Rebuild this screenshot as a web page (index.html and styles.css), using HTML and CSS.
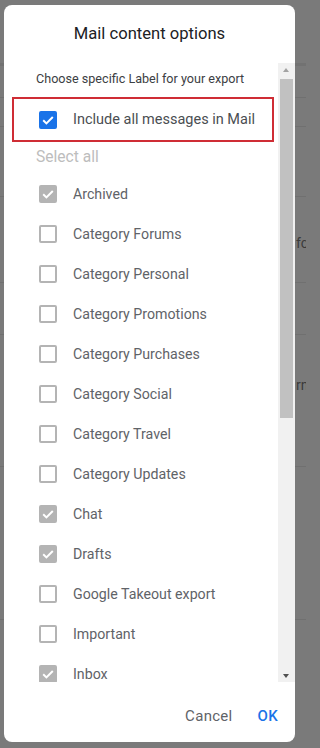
FILE: index.html
```html
<!DOCTYPE html>
<html>
<head>
<meta charset="utf-8">
<link rel="stylesheet" href="styles.css">
</head>
<body>
<div class="backdrop">
  <div class="bg-row r1"></div>
  <div class="bg-row r2"></div>
  <div class="bg-row r3"></div>
  <div class="bg-row r4"></div>
  <div class="bg-row r5"><span class="frag">fc</span></div>
  <div class="bg-row r6"></div>
  <div class="bg-row r7"><span class="frag">rn</span></div>
  <div class="bg-row r8"></div>
  <div class="bg-row r9"></div>
</div>

<div class="dialog">
  <div class="title">Mail content options</div>
  <div class="scroll">
    <div class="list">
      <div class="hint">Choose specific Label for your export</div>
      <div class="highlight">
        <span class="cb cb-on"><svg viewBox="0 0 18 18"><path d="M4.2 9.3 L7.4 12.4 L13.8 6" /></svg></span>
        <span class="label big">Include all messages in Mail</span>
      </div>
      <div class="select-all">Select all</div>
      <div class="row"><span class="cb cb-dis"><svg viewBox="0 0 18 18"><path d="M4.2 9.3 L7.4 12.4 L13.8 6" /></svg></span><span class="label">Archived</span></div>
      <div class="row"><span class="cb"></span><span class="label">Category Forums</span></div>
      <div class="row"><span class="cb"></span><span class="label">Category Personal</span></div>
      <div class="row"><span class="cb"></span><span class="label">Category Promotions</span></div>
      <div class="row"><span class="cb"></span><span class="label">Category Purchases</span></div>
      <div class="row"><span class="cb"></span><span class="label">Category Social</span></div>
      <div class="row"><span class="cb"></span><span class="label">Category Travel</span></div>
      <div class="row"><span class="cb"></span><span class="label">Category Updates</span></div>
      <div class="row"><span class="cb cb-dis"><svg viewBox="0 0 18 18"><path d="M4.2 9.3 L7.4 12.4 L13.8 6" /></svg></span><span class="label">Chat</span></div>
      <div class="row"><span class="cb cb-dis"><svg viewBox="0 0 18 18"><path d="M4.2 9.3 L7.4 12.4 L13.8 6" /></svg></span><span class="label">Drafts</span></div>
      <div class="row"><span class="cb"></span><span class="label">Google Takeout export</span></div>
      <div class="row"><span class="cb"></span><span class="label">Important</span></div>
      <div class="row"><span class="cb cb-dis"><svg viewBox="0 0 18 18"><path d="M4.2 9.3 L7.4 12.4 L13.8 6" /></svg></span><span class="label">Inbox</span></div>
    </div>
    <div class="sbar">
      <div class="arrow up"></div>
      <div class="track">
        <div class="thumb"></div>
      </div>
      <div class="arrow down"></div>
    </div>
  </div>
  <div class="actions">
    <span class="btn cancel">Cancel</span>
    <span class="btn ok">OK</span>
  </div>
</div>
</body>
</html>
```

FILE: styles.css
```css
* { box-sizing: border-box; }
html, body { margin: 0; padding: 0; }
body {
  width: 306px;
  height: 748px;
  overflow: hidden;
  background: #7a7a7a;
  font-family: Roboto, "Liberation Sans", Arial, sans-serif;
  position: relative;
}

.backdrop {
  display: flex;
  flex-direction: column;
}
.bg-row {
  border-bottom: 1px solid #707070;
  position: relative;
}
.r1 { height: 66px; border-bottom: 3px solid #727272; }
.r2 { height: 32px; }
.r3 { height: 29px; }
.r4 { height: 70px; }
.r5 { height: 86px; }
.r6 { height: 52px; }
.r7 { height: 132px; }
.r8 { height: 153px; }
.r9 { height: 128px; border-bottom: none; }
.frag {
  position: absolute;
  left: 296px;
  font-size: 14px;
  line-height: 16px;
  color: #3a3a3a;
}
.r5 .frag { top: 38px; }
.r7 .frag { top: 42px; }

.dialog {
  position: absolute;
  left: 4px;
  top: 5px;
  width: 291px;
  height: 737px;
  background: #fff;
  border-radius: 8px;
  display: flex;
  flex-direction: column;
  overflow: hidden;
}

.title {
  height: 58px;
  padding-top: 19px;
  text-align: center;
  font-size: 16.6px;
  line-height: 20px;
  color: #202124;
}

.scroll {
  height: 619px;
  display: flex;
}
.list {
  flex: 1;
  overflow: hidden;
}
.hint {
  padding: 8px 0 0 32px;
  font-size: 12.6px;
  line-height: 16px;
  color: #3c4043;
  height: 34px;
}
.highlight {
  margin-left: 8px;
  width: 262px;
  height: 45px;
  border: 2px solid #cf2d35;
  display: flex;
  align-items: center;
  padding-left: 25px;
}
.select-all {
  height: 32px;
  padding: 5px 0 0 32px;
  font-size: 15.6px;
  line-height: 20px;
  color: #bdbdbd;
}
.row {
  height: 40px;
  display: flex;
  align-items: center;
  padding-left: 35px;
}
.cb {
  width: 18px;
  height: 18px;
  flex: none;
  border: 2px solid #b4b4b4;
  border-radius: 2px;
  display: flex;
}
.cb svg { width: 18px; height: 18px; margin: -2px; }
.cb path { fill: none; stroke: #fff; stroke-width: 2; }
.cb-on { background: #1a73e8; border-color: #1a73e8; }
.cb-dis { background: #b4b4b4; border-color: #b4b4b4; }
.label {
  margin-left: 16px;
  font-size: 14.2px;
  line-height: 20px;
  color: #5f6368;
}
.label.big { font-size: 14.5px; color: #4a4e52; }

.sbar {
  width: 17px;
  flex: none;
  background: #f1f1f1;
  display: flex;
  flex-direction: column;
  align-items: center;
}
.arrow {
  height: 16px;
  width: 17px;
  position: relative;
}
.arrow::after {
  content: "";
  position: absolute;
  left: 5px;
  border-left: 3.5px solid transparent;
  border-right: 3.5px solid transparent;
}
.arrow.up::after { top: 5px; border-bottom: 4px solid #a3a3a3; }
.arrow.down::after { top: 8px; border-top: 4px solid #505050; }
.track { flex: 1; width: 100%; padding: 0 2px; }
.thumb {
  height: 339px;
  background: #c1c1c1;
}

.actions {
  flex: 1;
  display: flex;
  justify-content: flex-end;
  align-items: center;
  padding: 8px 17px 0 0;
  gap: 25px;
}
.btn {
  font-size: 15px;
  font-weight: 400;
  letter-spacing: 0.3px;
  line-height: 20px;
}
.cancel { color: #5f6368; }
.ok { color: #1a73e8; font-weight: 500; }
```
